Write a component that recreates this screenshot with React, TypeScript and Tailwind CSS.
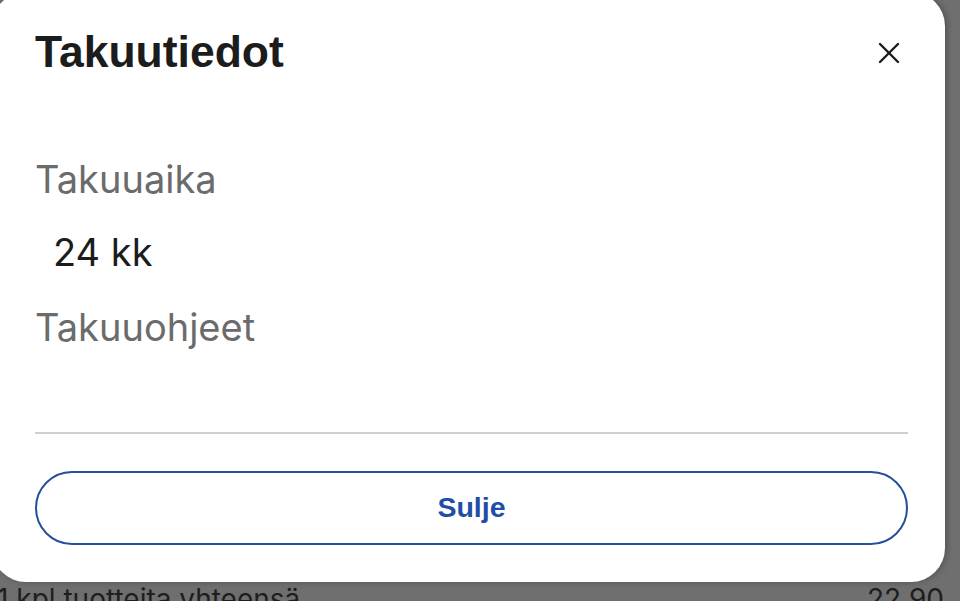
const CloseIcon = () => (
  <svg width="22" height="22" viewBox="0 0 22 22" fill="none" stroke="#1c1c1c" strokeWidth="2.4" strokeLinecap="round">
    <line x1="2" y1="2" x2="20" y2="20" />
    <line x1="20" y1="2" x2="2" y2="20" />
  </svg>
)

const App = () => {
  return (
    <div className="relative h-[601px] w-[960px] overflow-hidden bg-[#6f6f6f]">
      {/* Page behind the overlay */}
      <div className="flex items-start justify-between pt-[585px] pr-[16px] font-['Inter',sans-serif] text-[28px] leading-none text-[#1e1e1e]">
        <span className="-ml-[3px]">1 kpl tuotteita yhteensä</span>
        <span>22,90</span>
      </div>

      {/* Modal */}
      <div className="absolute top-[-8px] left-[-8px] flex h-[590px] w-[953px] flex-col rounded-[34px] bg-white pr-[37px] pl-[43px] shadow-[2px_0_6px_rgba(0,0,0,0.25)]">
        <div className="mt-[38px] flex items-start justify-between">
          <h1 className="font-['Liberation_Sans',Arial,sans-serif] text-[44.5px] leading-none font-bold text-[#1c1c1c]">
            Takuutiedot
          </h1>
          <div className="mt-[12px] mr-[8px]">
            <CloseIcon />
          </div>
        </div>

        <div className="flex flex-col font-['Inter',sans-serif] text-[38px] leading-none">
          <p className="mt-[85px] text-[#6b6b6b]">Takuuaika</p>
          <p className="mt-[35px] pl-[18px] text-[#1c1c1c]">24 kk</p>
          <p className="mt-[37px] text-[#6b6b6b]">Takuuohjeet</p>
        </div>

        <div className="mt-[86px] h-[2px] w-full bg-[#cfcfcf]" />

        <button
          type="button"
          className="mt-[37px] flex h-[74px] w-full items-center justify-center rounded-full border-2 border-[#244f9a] font-['Liberation_Sans',Arial,sans-serif] text-[28.5px] font-bold text-[#1f4ea6]"
        >
          Sulje
        </button>
      </div>
    </div>
  )
}

export default App
